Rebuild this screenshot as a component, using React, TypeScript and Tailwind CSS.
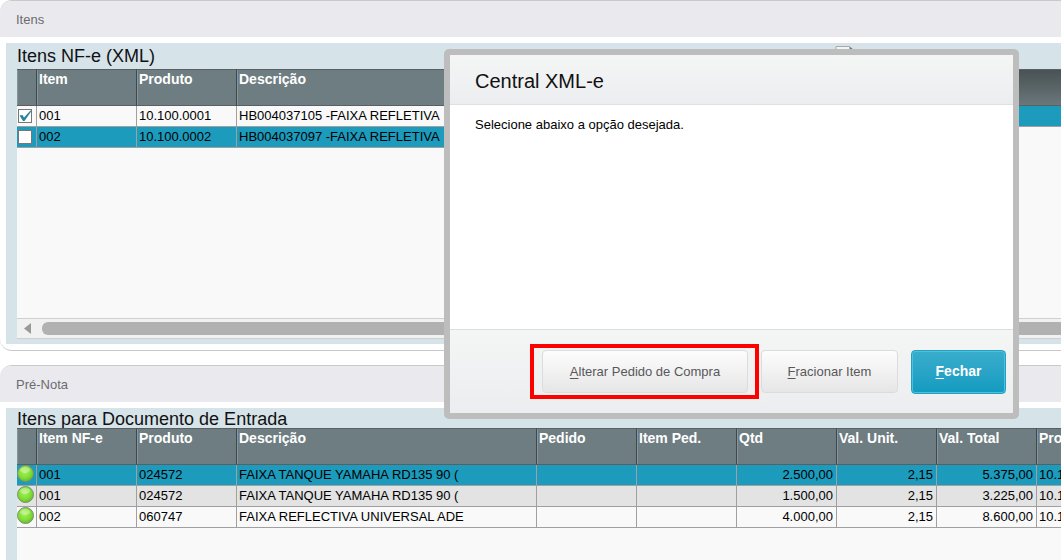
import type { ReactNode } from 'react';

const cell = 'h-[21px] overflow-hidden border-r border-b border-[#a0a0a0] py-0 pl-[2px] text-[13px] leading-[20px] whitespace-nowrap';
const head = 'h-[37px] overflow-hidden border-y border-r border-y-[#5b5f61] border-r-[#3f484b] px-[2px] py-0 text-left align-top text-[14px] leading-[18px] font-bold whitespace-nowrap text-white inset-shadow-[1px_0_0_#87949a]';

function Panel({ title, grow, children }: { title: string; grow?: boolean; children: ReactNode }) {
  return (
    <section className={`flex flex-col overflow-hidden rounded-l-xl border-y border-[#c9c9c9] bg-white ${grow ? 'flex-1 rounded-bl-none border-b-0' : ''}`}>
      <h2 className="h-9 bg-[#eae9ee] px-4 text-[13px] leading-[38px] text-[#6c6c70]">{title}</h2>
      <div className={`mt-[6px] ml-[6px] flex bg-[#d6e3e9] ${grow ? 'flex-1' : 'mb-[6px] h-[301px]'}`}>{children}</div>
    </section>
  );
}

function HeadRow({ labels }: { labels: string[] }) {
  return (
    <thead>
      <tr className="bg-[#6e7d81]">
        <th className={head} aria-label="Status" />
        {labels.map((l) => (
          <th key={l} className={head}>{l}</th>
        ))}
      </tr>
    </thead>
  );
}

function GreenBall() {
  return (
    <svg width="18" height="18" viewBox="0 0 18 18" className="block">
      <defs>
        <radialGradient id="ball" cx="45%" cy="40%" r="65%">
          <stop offset="0" stopColor="#a6f058" />
          <stop offset="0.6" stopColor="#7fdd35" />
          <stop offset="1" stopColor="#5cb81f" />
        </radialGradient>
      </defs>
      <circle cx="8.500" cy="8.500" r="8" fill="url(#ball)" stroke="#7d8f74" />
      <ellipse cx="8" cy="5" rx="5" ry="3" fill="#fff" opacity="0.35" />
    </svg>
  );
}

function Tick({ checked, label }: { checked?: boolean; label: string }) {
  return (
    <label className="relative block h-[14px] w-[14px]">
      <input
        type="checkbox"
        defaultChecked={checked}
        aria-label={label}
        className="peer block h-[14px] w-[14px] appearance-none border border-[#777] bg-white"
      />
      <svg viewBox="0 0 14 14" className="pointer-events-none absolute inset-0 hidden h-[14px] w-[14px] peer-checked:block">
        <path d="M1.500 6.500L4.500 6L6 8.500L12.500 1.500L13.500 2L6.500 12H5Z" fill="#2b8596" />
      </svg>
    </label>
  );
}

function ScrollBar({ arrow }: { arrow?: boolean }) {
  return (
    <div className="flex h-[21px] items-center border-y border-[#cfcfcf] bg-[#f1f1f1]">
      {arrow && (
        <button aria-label="Rolar para a esquerda" className="flex h-full w-[25px] items-center pl-[7px]">
          <svg width="7" height="11" viewBox="0 0 7 11"><path d="M7 0V11L0 5.500Z" fill="#999" /></svg>
        </button>
      )}
      <div className={`h-[13px] flex-1 bg-[#b1b1b1] ${arrow ? 'rounded-l-md' : ''}`} />
    </div>
  );
}

const xmlRows = [
  { item: '001', product: '10.100.0001', text: 'HB004037105 -FAIXA REFLETIVA', checked: true },
  { item: '002', product: '10.100.0002', text: 'HB004037097 -FAIXA REFLETIVA', checked: false },
];

const noteRows = [
  ['001', '024572', 'FAIXA TANQUE YAMAHA RD135 90 (', '', '', '2.500,00', '2,15', '5.375,00', '10.1'],
  ['001', '024572', 'FAIXA TANQUE YAMAHA RD135 90 (', '', '', '1.500,00', '2,15', '3.225,00', '10.1'],
  ['002', '060747', 'FAIXA REFLECTIVA UNIVERSAL ADE', '', '', '4.000,00', '2,15', '8.600,00', '10.1'],
];
const noteRowColors = ['bg-[#1c9bbd]', 'bg-[#e3e3e3]', 'bg-[#f9f9f9]'];

function Dialog() {
  return (
    <div
      role="dialog"
      aria-labelledby="dialog-title"
      className="absolute top-[49px] left-[444px] flex h-[370px] w-[575px] flex-col rounded-[5px] border-[6px] border-[#bdbdbd] bg-white"
    >
      <h1 id="dialog-title" className="h-[50px] border-b border-[#e0e0e2] bg-linear-to-b from-[#f4f6f5] to-[#ecedf0] px-[25px] text-[20px] leading-[52px] text-[#111]">
        Central XML-e
      </h1>
      <p className="flex-1 px-[25px] pt-[11px] text-[13px] leading-[18px] text-black">Selecione abaixo a opção desejada.</p>
      <div className="flex h-[84px] items-center justify-end border-t border-[#dedede] bg-linear-to-b from-[#f4f6f5] to-[#ecedf0] pr-[7px]">
        <div className="border-[4px] border-[#fd0000] py-[2px] pr-[7px] pl-[8px]">
          <button className="block h-[43px] w-[206px] rounded border border-[#dcdcdc] bg-linear-to-b from-[#fdfdfd] to-[#e6e6e6] text-[13px] text-[#58585a]">
            <span className="underline underline-offset-2">A</span>lterar Pedido de Compra
          </button>
        </div>
        <button className="ml-[2px] h-[43px] w-[137px] rounded border border-[#dcdcdc] bg-linear-to-b from-[#fdfdfd] to-[#e6e6e6] text-[13px] text-[#58585a]">
          <span className="underline underline-offset-2">F</span>racionar Item
        </button>
        <button className="ml-[13px] h-11 w-[95px] rounded border border-[#2a9fbd] bg-linear-to-b from-[#39adcc] to-[#109bc0] text-[14px] font-bold text-white inset-ring inset-ring-[#47c3e2]">
          <span className="underline underline-offset-2">F</span>echar
        </button>
      </div>
    </div>
  );
}

export default function App() {
  return (
    <main className="relative flex min-h-screen flex-col gap-[14px] overflow-hidden bg-white font-['Liberation_Sans',Arial,sans-serif] text-black">
      <Panel title="Itens">
        <div className="flex min-w-0 flex-1 flex-col pb-[5px] pl-[11px]">
          <h3 className="h-[26px] text-[18px] leading-[26px] text-[#111]">Itens NF-e (XML)</h3>
          <div className="flex-1 bg-[#f9f9f9]">
            <table className="w-full table-fixed border-separate border-spacing-0">
              <colgroup><col className="w-5" /><col className="w-[100px]" /><col className="w-[100px]" /><col /></colgroup>
              <HeadRow labels={['Item', 'Produto', 'Descrição']} />
              <tbody>
                {xmlRows.map((r) => (
                  <tr key={r.item} className={r.checked ? 'bg-[#f9f9f9]' : 'bg-[#1c9bbd]'}>
                    <td className="h-[21px] border-r border-b border-[#a0a0a0] px-px py-0"><Tick checked={r.checked} label={`Item ${r.item}`} /></td>
                    <td className={cell}>{r.item}</td>
                    <td className={cell}>{r.product}</td>
                    <td className={cell}>{r.text}</td>
                  </tr>
                ))}
              </tbody>
            </table>
          </div>
          <ScrollBar arrow />
        </div>
        <div className="flex w-[45%] flex-col pb-[5px]">
          <div className="flex h-[26px] items-start pt-[2px] pl-[249px]">
            <svg width="20" height="22" viewBox="0 0 20 22"><path d="M1 1.500H14.500L19 6V21H1Z" fill="#f4f4f4" stroke="#aaa" /><path d="M14.500 1.500L19 5H14.500Z" fill="#6a7a76" /></svg>
          </div>
          <div className="flex-1 bg-[#f9f9f9]">
            <div className="h-[37px] border-y border-[#5b5f61] bg-linear-to-b from-[#495254] to-[#6a777b]" />
            <div className="h-[21px] border-b border-[#a0a0a0] bg-[#1c9bbd]" />
          </div>
          <ScrollBar />
        </div>
      </Panel>

      <Panel title="Pré-Nota" grow>
        <div className="flex min-w-0 flex-1 flex-col overflow-hidden pl-[11px]">
          <h3 className="h-5 text-[18px] leading-[22px] text-[#111]">Itens para Documento de Entrada</h3>
          <div className="flex-1 overflow-hidden bg-[#f9f9f9]">
            <table className="w-[1120px] table-fixed border-separate border-spacing-0">
              <colgroup>
                <col className="w-5" /><col className="w-[100px]" /><col className="w-[100px]" /><col className="w-[300px]" />
                <col className="w-[100px]" /><col className="w-[100px]" /><col className="w-[100px]" /><col className="w-[100px]" /><col className="w-[100px]" /><col className="w-[100px]" />
              </colgroup>
              <HeadRow labels={['Item NF-e', 'Produto', 'Descrição', 'Pedido', 'Item Ped.', 'Qtd', 'Val. Unit.', 'Val. Total', 'Pro']} />
              <tbody>
                {noteRows.map((r, i) => (
                  <tr key={i} className={noteRowColors[i]}>
                    <td className="h-[21px] border-r border-b border-[#a0a0a0] p-0 align-top"><GreenBall /></td>
                    {r.map((v, j) => (
                      <td key={j} className={`${cell} ${j > 4 && j < 8 ? 'pr-[3px] text-right' : ''}`}>{v}</td>
                    ))}
                  </tr>
                ))}
              </tbody>
            </table>
          </div>
        </div>
      </Panel>

      <Dialog />
    </main>
  );
}
